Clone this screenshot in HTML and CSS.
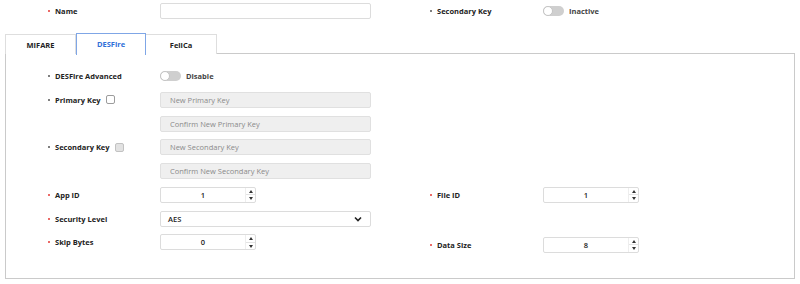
FILE: index.html
```html
<!DOCTYPE html>
<html lang="en">
<head>
  <meta charset="UTF-8" />
  <title>Card Settings</title>
  <link rel="stylesheet" href="styles.css">
</head>
<body>
  <!-- Top row -->
  <div class="form-grid top-row">
    <div class="label"><span class="dot req"></span>Name</div>
    <div class="field"><input class="text-input" type="text" /></div>
    <div class="label col-r"><span class="dot"></span>Secondary Key</div>
    <div class="field">
      <span class="switch"><span class="knob"></span></span>
      <span class="switch-text">Inactive</span>
    </div>
  </div>

  <!-- Tabs -->
  <div class="tabs">
    <div class="tab">MIFARE</div>
    <div class="tab active">DESFire</div>
    <div class="tab">FeliCa</div>
  </div>

  <div class="panel">
    <div class="form-grid">
      <div class="label"><span class="dot"></span>DESFire Advanced</div>
      <div class="field">
        <span class="switch"><span class="knob"></span></span>
        <span class="switch-text">Disable</span>
      </div>

      <div class="label"><span class="dot"></span>Primary Key<span class="check"></span></div>
      <div class="field"><input class="text-input" type="text" placeholder="New Primary Key" disabled /></div>

      <div class="field col-c"><input class="text-input" type="text" placeholder="Confirm New Primary Key" disabled /></div>

      <div class="label"><span class="dot"></span>Secondary Key<span class="check off"></span></div>
      <div class="field"><input class="text-input" type="text" placeholder="New Secondary Key" disabled /></div>

      <div class="field col-c"><input class="text-input" type="text" placeholder="Confirm New Secondary Key" disabled /></div>

      <div class="label"><span class="dot req"></span>App ID</div>
      <div class="field">
        <div class="num"><span class="num-val">1</span><span class="spin"><i class="up"></i><i class="down"></i></span></div>
      </div>
      <div class="label col-r"><span class="dot req"></span>File ID</div>
      <div class="field">
        <div class="num"><span class="num-val">1</span><span class="spin"><i class="up"></i><i class="down"></i></span></div>
      </div>

      <div class="label"><span class="dot req"></span>Security Level</div>
      <div class="field">
        <div class="select">
          <span>AES</span>
          <svg width="8" height="6" viewBox="0 0 8 6"><path d="M1 1.5 L4 4.5 L7 1.5" fill="none" stroke="#222" stroke-width="1.6"/></svg>
        </div>
      </div>

      <div class="label"><span class="dot req"></span>Skip Bytes</div>
      <div class="field">
        <div class="num"><span class="num-val">0</span><span class="spin"><i class="up"></i><i class="down"></i></span></div>
      </div>
      <div class="label col-r shift"><span class="dot req"></span>Data Size</div>
      <div class="field shift">
        <div class="num"><span class="num-val">8</span><span class="spin"><i class="up"></i><i class="down"></i></span></div>
      </div>
    </div>
  </div>
</body>
</html>
```

FILE: styles.css
```css
body {
  margin: 0;
  padding-top: 3px;
  font-family: "Open Sans", "Noto Sans", sans-serif;
  font-size: 7.5px;
  color: #222;
  background: #fff;
}
.form-grid {
  display: grid;
  grid-template-columns: 112px 211px 59px 113px 96px;
  grid-auto-rows: 16px;
  row-gap: 7.75px;
  align-items: center;
}
.top-row {
  padding-left: 48px;
}
.label {
  grid-column: 1;
  display: flex;
  align-items: center;
  font-weight: 700;
  white-space: nowrap;
}
.col-r {
  grid-column: 4;
}
.col-c {
  grid-column: 2;
}
.shift {
  margin-top: 5px;
}
.dot {
  width: 2px;
  height: 2px;
  border-radius: 50%;
  background: #555;
  margin-right: 5px;
}
.dot.req {
  background: #e53935;
}
.field {
  display: flex;
  align-items: center;
  height: 16px;
}
.text-input {
  box-sizing: border-box;
  width: 211px;
  height: 16px;
  margin: 0;
  padding: 0 9px;
  border: 1px solid #dcdcdc;
  border-radius: 2px;
  background: #fff;
  font-family: inherit;
  font-size: 7.5px;
  color: #222;
}
.text-input:disabled {
  background: #efefef;
  border-color: #e0e0e0;
}
.text-input::placeholder {
  color: #8a8a8a;
}
.switch {
  position: relative;
  width: 21px;
  height: 10px;
  border-radius: 5px;
  background: #cfcfcf;
}
.knob {
  position: absolute;
  left: 0;
  top: 0;
  box-sizing: border-box;
  width: 10px;
  height: 10px;
  border-radius: 50%;
  background: #fff;
  border: 1px solid #c4c4c4;
}
.switch-text {
  margin-left: 5px;
  font-weight: 700;
  color: #444;
}
.check {
  box-sizing: border-box;
  width: 9px;
  height: 9px;
  margin-left: 5px;
  border: 1px solid #9c9c9c;
  border-radius: 2px;
  background: #fff;
}
.check.off {
  background: #e2e2e2;
  border-color: #c2c2c2;
}
.tabs {
  display: flex;
  margin: 14px 0 0 5px;
  height: 20px;
  position: relative;
  z-index: 1;
}
.tab {
  box-sizing: border-box;
  width: 71px;
  height: 20px;
  margin-top: 1px;
  border: 1px solid #dedede;
  border-bottom: none;
  font-weight: 700;
  text-align: center;
  line-height: 20px;
  background: #fff;
}
.tab + .tab {
  border-left: none;
}
.tab.active {
  width: 70px;
  height: 22px;
  margin-top: 0;
  border: 1px solid #7fa6e6;
  border-bottom: none;
  color: #2f6fd8;
  line-height: 21px;
}
.panel {
  box-sizing: border-box;
  margin: 0 5px;
  height: 226px;
  border: 1px solid #cacaca;
  padding: 14px 0 0 42px;
}
.num {
  box-sizing: border-box;
  display: flex;
  width: 96px;
  height: 16px;
  border: 1px solid #dcdcdc;
  border-radius: 2px;
  background: #fff;
}
.num-val {
  flex: 1;
  text-align: center;
  line-height: 14px;
  font-weight: 600;
  color: #222;
}
.spin {
  width: 9px;
  display: flex;
  flex-direction: column;
  border-left: 1px solid #eee;
}
.spin i {
  flex: 1;
  display: flex;
  align-items: center;
  justify-content: center;
}
.spin .up::before,
.spin .down::before {
  content: "";
  border-left: 2.5px solid transparent;
  border-right: 2.5px solid transparent;
}
.spin .up::before {
  border-bottom: 3px solid #333;
}
.spin .down::before {
  border-top: 3px solid #333;
}
.spin .up {
  border-bottom: 1px solid #e4e4e4;
}
.select {
  box-sizing: border-box;
  display: flex;
  align-items: center;
  justify-content: space-between;
  width: 211px;
  height: 16px;
  padding: 0 8px 0 7px;
  border: 1px solid #dcdcdc;
  border-radius: 2px;
  background: #fff;
  font-weight: 600;
}
```
